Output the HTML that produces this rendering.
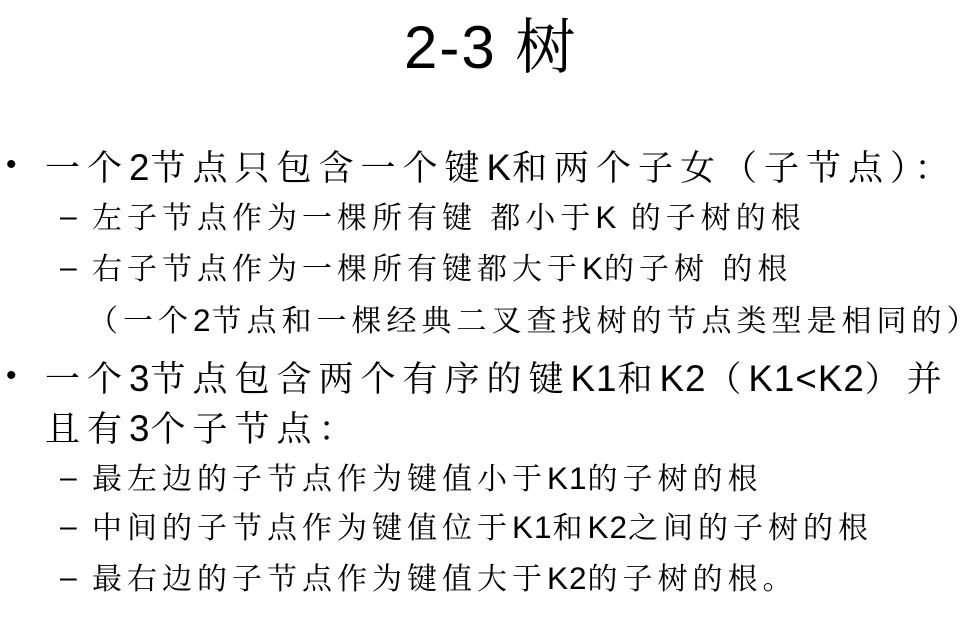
<!DOCTYPE html>
<html><head><meta charset="utf-8"><style>
body{margin:0;width:975px;height:618px;background:#fff;overflow:hidden;position:relative;font-family:"Liberation Sans","Noto Serif CJK SC",serif;color:#000}
.l{position:absolute;white-space:nowrap;line-height:1}
.m{font-size:35px;letter-spacing:7px;left:45px}
.s{font-size:30px;letter-spacing:5px;left:92px}
.l i{font-style:normal;letter-spacing:1px;font-size:1.05em}
.b{position:absolute;left:6px;font-size:30px}
.d{position:absolute;left:60px;font-size:30px;font-family:"Liberation Sans",sans-serif}
</style></head><body>
<div class="l" style="left:404px;top:18px;font-size:60px;letter-spacing:2px">2-3 树</div>

<div class="l b" style="top:150px">•</div>
<div class="l m" style="top:150px">一个<i>2</i>节点只包含一个键<i>K</i>和两个子女（子节点）：</div>
<div class="l d" style="top:202px">–</div>
<div class="l s" style="top:202px">左子节点作为一棵所有键 都小于<i>K</i> 的子树的根</div>
<div class="l d" style="top:253px">–</div>
<div class="l s" style="top:253px">右子节点作为一棵所有键都大于<i>K</i>的子树 的根</div>
<div class="l s" style="top:305px;left:88px">（一个<i>2</i>节点和一棵经典二叉查找树的节点类型是相同的）</div>

<div class="l b" style="top:361px">•</div>
<div class="l m" style="top:361px">一个<i>3</i>节点包含两个有序的键<i>K1</i>和<i>K2</i>（<i>K1&lt;K2</i>）并</div>
<div class="l m" style="top:411px">且有<i>3</i>个子节点：</div>
<div class="l d" style="top:463px">–</div>
<div class="l s" style="top:463px">最左边的子节点作为键值小于<i>K1</i>的子树的根</div>
<div class="l d" style="top:512px">–</div>
<div class="l s" style="top:512px">中间的子节点作为键值位于<i>K1</i>和<i>K2</i>之间的子树的根</div>
<div class="l d" style="top:563px">–</div>
<div class="l s" style="top:563px">最右边的子节点作为键值大于<i>K2</i>的子树的根。</div>
</body></html>
